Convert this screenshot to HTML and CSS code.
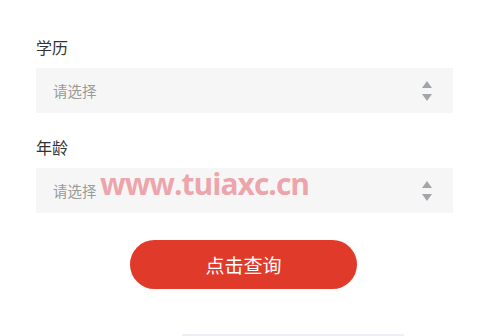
FILE: index.html
```html
<!DOCTYPE html>
<html lang="zh">
<head>
<meta charset="utf-8">
<link rel="stylesheet" href="styles.css">
</head>
<body>
<div class="page">
  <form class="form">
    <div class="field">
      <div class="label">学历</div>
      <div class="select">
        <span class="placeholder">请选择</span>
        <span class="arrows"><i class="up"></i><i class="down"></i></span>
      </div>
    </div>
    <div class="field">
      <div class="label">年龄</div>
      <div class="select">
        <span class="placeholder">请选择</span>
        <span class="arrows"><i class="up"></i><i class="down"></i></span>
      </div>
    </div>
    <div class="actions">
      <button type="button" class="btn">点击查询</button>
    </div>
  </form>
  <div class="watermark">www.tuiaxc.cn</div>
  <div class="bottom-strip"></div>
</div>
</body>
</html>
```
FILE: styles.css
```css
html, body {
  margin: 0;
  padding: 0;
  background: #fff;
}
.page {
  position: relative;
  width: 499px;
  height: 336px;
  overflow: hidden;
  font-family: "Noto Sans CJK SC", "Noto Sans", sans-serif;
}
.form {
  display: flex;
  flex-direction: column;
  width: 417px;
  margin: 0 0 0 36px;
  padding-top: 36px;
}
.field {
  display: flex;
  flex-direction: column;
  gap: 10px;
  margin-bottom: 23px;
}
.field + .field {
  margin-bottom: 27px;
}
.label {
  font-size: 16px;
  line-height: 22px;
  color: #333;
}
.select {
  display: flex;
  align-items: center;
  justify-content: space-between;
  height: 45px;
  background: #f6f6f6;
  padding: 0 21px 0 17px;
}
.placeholder {
  font-size: 14.5px;
  color: #9a9a9a;
}
.arrows {
  display: flex;
  flex-direction: column;
  gap: 6px;
}
.arrows i {
  display: block;
  width: 0;
  height: 0;
  border-left: 5.5px solid transparent;
  border-right: 5.5px solid transparent;
}
.arrows .up {
  border-bottom: 7px solid #a2a6ab;
}
.arrows .down {
  border-top: 7px solid #a2a6ab;
}
.actions {
  display: flex;
  justify-content: center;
  padding-right: 2px;
}
.btn {
  width: 227px;
  height: 49px;
  border: none;
  border-radius: 25px;
  background: #e03b2a;
  color: #fff;
  font-family: "Noto Sans CJK SC", sans-serif;
  font-size: 19px;
  padding: 0;
}
.watermark {
  position: absolute;
  left: 100px;
  top: 164px;
  font-family: "Open Sans", sans-serif;
  font-weight: 700;
  font-size: 30px;
  letter-spacing: -1px;
  color: rgba(232, 110, 122, 0.6);
  line-height: 40px;
}
.bottom-strip {
  position: absolute;
  left: 182px;
  bottom: 0;
  width: 222px;
  height: 2px;
  background: #efeff8;
}
```
